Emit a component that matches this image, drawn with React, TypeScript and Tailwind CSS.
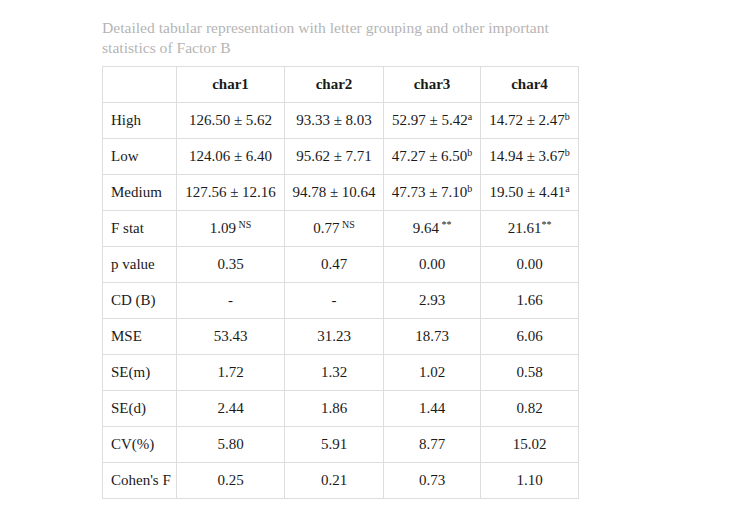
import React from "react";

type Cell = { v: string; sup?: string; supSpace?: boolean };

const rows: { label: string; cells: Cell[] }[] = [
  { label: "High", cells: [{ v: "126.50 ± 5.62" }, { v: "93.33 ± 8.03" }, { v: "52.97 ± 5.42", sup: "a" }, { v: "14.72 ± 2.47", sup: "b" }] },
  { label: "Low", cells: [{ v: "124.06 ± 6.40" }, { v: "95.62 ± 7.71" }, { v: "47.27 ± 6.50", sup: "b" }, { v: "14.94 ± 3.67", sup: "b" }] },
  { label: "Medium", cells: [{ v: "127.56 ± 12.16" }, { v: "94.78 ± 10.64" }, { v: "47.73 ± 7.10", sup: "b" }, { v: "19.50 ± 4.41", sup: "a" }] },
  { label: "F stat", cells: [{ v: "1.09", sup: "NS", supSpace: true }, { v: "0.77", sup: "NS", supSpace: true }, { v: "9.64", sup: "**", supSpace: true }, { v: "21.61", sup: "**" }] },
  { label: "p value", cells: [{ v: "0.35" }, { v: "0.47" }, { v: "0.00" }, { v: "0.00" }] },
  { label: "CD (B)", cells: [{ v: "-" }, { v: "-" }, { v: "2.93" }, { v: "1.66" }] },
  { label: "MSE", cells: [{ v: "53.43" }, { v: "31.23" }, { v: "18.73" }, { v: "6.06" }] },
  { label: "SE(m)", cells: [{ v: "1.72" }, { v: "1.32" }, { v: "1.02" }, { v: "0.58" }] },
  { label: "SE(d)", cells: [{ v: "2.44" }, { v: "1.86" }, { v: "1.44" }, { v: "0.82" }] },
  { label: "CV(%)", cells: [{ v: "5.80" }, { v: "5.91" }, { v: "8.77" }, { v: "15.02" }] },
  { label: "Cohen's F", cells: [{ v: "0.25" }, { v: "0.21" }, { v: "0.73" }, { v: "1.10" }] },
];

export default function App() {
  return (
    <div className="min-h-[517px] w-[744px] bg-white pl-[102px] pt-[18px] font-['Liberation_Serif',serif] text-[15px] text-[#1a1a1a]">
      <p className="w-[470px] text-[15.6px] leading-[20px] text-[#b5b5b5]">
        Detailed tabular representation with letter grouping and other important statistics of Factor B
      </p>
      <table className="mt-[8px] w-[476px] table-fixed border-collapse">
        <colgroup>
          <col className="w-[74px]" />
          <col className="w-[108px]" />
          <col className="w-[99px]" />
          <col className="w-[97px]" />
          <col className="w-[98px]" />
        </colgroup>
        <thead>
          <tr className="h-[36px]">
            <th className="border border-[#dddddd]"></th>
            {["char1", "char2", "char3", "char4"].map((h) => (
              <th key={h} className="border border-[#dddddd] text-center font-bold">
                {h}
              </th>
            ))}
          </tr>
        </thead>
        <tbody>
          {rows.map((r) => (
            <tr key={r.label} className="h-[36px]">
              <td className="border border-[#dddddd] pl-[8px] whitespace-nowrap">{r.label}</td>
              {r.cells.map((c, i) => (
                <td key={i} className="border border-[#dddddd] text-center whitespace-nowrap">
                  {c.v}
                  {c.sup && (
                    <sup className="text-[10px]">
                      {c.supSpace ? " " : ""}
                      {c.sup}
                    </sup>
                  )}
                </td>
              ))}
            </tr>
          ))}
        </tbody>
      </table>
    </div>
  );
}
